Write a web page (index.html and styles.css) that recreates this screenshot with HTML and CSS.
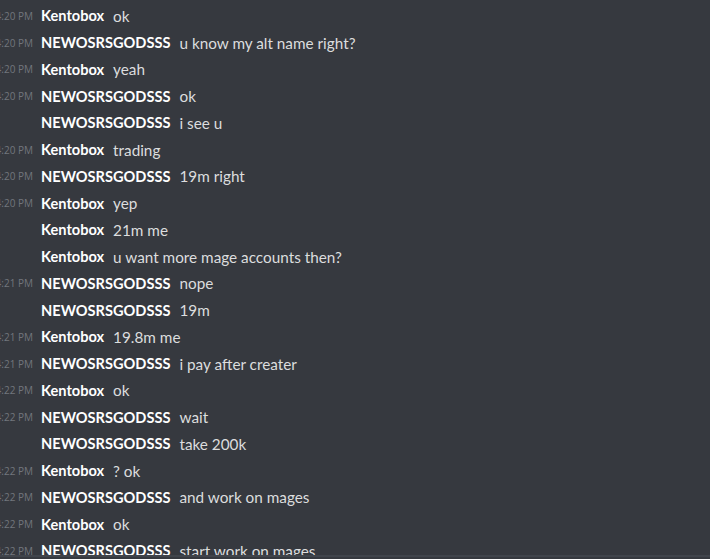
FILE: index.html
```html
<!DOCTYPE html>
<html>
<head>
<meta charset="utf-8">
<link rel="stylesheet" href="styles.css">
</head>
<body>
<div class="chat">
  <div class="row"><span class="time">4:20 PM</span><span class="name">Kentobox</span><span class="msg">ok</span></div>
  <div class="row"><span class="time">4:20 PM</span><span class="name">NEWOSRSGODSSS</span><span class="msg">u know my alt name right?</span></div>
  <div class="row"><span class="time">4:20 PM</span><span class="name">Kentobox</span><span class="msg">yeah</span></div>
  <div class="row"><span class="time">4:20 PM</span><span class="name">NEWOSRSGODSSS</span><span class="msg">ok</span></div>
  <div class="row"><span class="time"></span><span class="name">NEWOSRSGODSSS</span><span class="msg">i see u</span></div>
  <div class="row"><span class="time">4:20 PM</span><span class="name">Kentobox</span><span class="msg">trading</span></div>
  <div class="row"><span class="time">4:20 PM</span><span class="name">NEWOSRSGODSSS</span><span class="msg">19m right</span></div>
  <div class="row"><span class="time">4:20 PM</span><span class="name">Kentobox</span><span class="msg">yep</span></div>
  <div class="row"><span class="time"></span><span class="name">Kentobox</span><span class="msg">21m me</span></div>
  <div class="row"><span class="time"></span><span class="name">Kentobox</span><span class="msg">u want more mage accounts then?</span></div>
  <div class="row"><span class="time">4:21 PM</span><span class="name">NEWOSRSGODSSS</span><span class="msg">nope</span></div>
  <div class="row"><span class="time"></span><span class="name">NEWOSRSGODSSS</span><span class="msg">19m</span></div>
  <div class="row"><span class="time">4:21 PM</span><span class="name">Kentobox</span><span class="msg">19.8m me</span></div>
  <div class="row"><span class="time">4:21 PM</span><span class="name">NEWOSRSGODSSS</span><span class="msg">i pay after creater</span></div>
  <div class="row"><span class="time">4:22 PM</span><span class="name">Kentobox</span><span class="msg">ok</span></div>
  <div class="row"><span class="time">4:22 PM</span><span class="name">NEWOSRSGODSSS</span><span class="msg">wait</span></div>
  <div class="row"><span class="time"></span><span class="name">NEWOSRSGODSSS</span><span class="msg">take 200k</span></div>
  <div class="row"><span class="time">4:22 PM</span><span class="name">Kentobox</span><span class="msg">? ok</span></div>
  <div class="row"><span class="time">4:22 PM</span><span class="name">NEWOSRSGODSSS</span><span class="msg">and work on mages</span></div>
  <div class="row"><span class="time">4:22 PM</span><span class="name">Kentobox</span><span class="msg">ok</span></div>
  <div class="row"><span class="time">4:22 PM</span><span class="name">NEWOSRSGODSSS</span><span class="msg">start work on mages</span></div>
</div>
</body>
</html>
```
FILE: styles.css
```css
html, body {
  margin: 0;
  padding: 0;
  background: #36393f;
  height: 100%;
  overflow: hidden;
}
.chat {
  height: 557px;
  box-sizing: border-box;
  padding-top: 2.6px;
  border-bottom: 2px solid #40444b;
  overflow: hidden;
  font-family: "Lato", "Open Sans", sans-serif;
}
.row {
  display: flex;
  align-items: center;
  height: 26.75px;
  white-space: nowrap;
}
.time {
  flex: 0 0 33px;
  width: 33px;
  min-width: 0;
  display: flex;
  justify-content: flex-end;
  font-family: "Open Sans", sans-serif;
  font-size: 10px;
  color: #72767d;
  margin-right: 8px;
}
.name {
  font-size: 14.6px;
  font-weight: 700;
  color: #ffffff;
  margin-right: 9px;
}
.msg {
  font-size: 15.3px;
  color: #dcddde;
}
```
